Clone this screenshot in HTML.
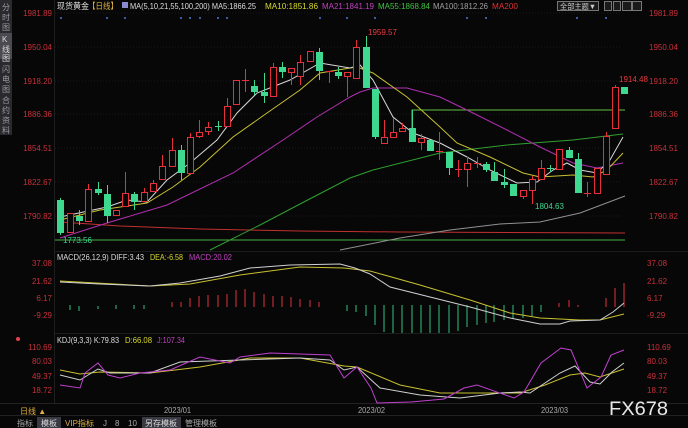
<!DOCTYPE html>
<html><head><meta charset="utf-8">
<style>
html,body{margin:0;padding:0;background:#070707;}
svg{display:block;font-family:"Liberation Sans","Noto Sans CJK SC",sans-serif;}
.ax{fill:#c8303a;font-size:8px;}
</style></head><body>
<svg width="688" height="428" viewBox="0 0 688 428" xmlns="http://www.w3.org/2000/svg">
<rect width="688" height="428" fill="#070707"/>
<!-- left sidebar -->
<rect x="0" y="0" width="12" height="135" fill="#2a2a2e"/>
<rect x="0" y="33" width="12" height="26" fill="#4a4a50"/>
<g fill="#9a9aa0" font-size="8">
<text x="2" y="10">分</text><text x="2" y="20">时</text><text x="2" y="30">图</text>
<text x="2" y="42" fill="#ddd">K</text><text x="2" y="52" fill="#ddd">线</text><text x="2" y="61" fill="#ddd">图</text>
<text x="2" y="72">闪</text><text x="2" y="82">电</text><text x="2" y="92">图</text>
<text x="2" y="103">合</text><text x="2" y="113">约</text><text x="2" y="123">资</text><text x="2" y="133">料</text>
</g>
<!-- panel borders -->
<line x1="54.5" y1="0" x2="54.5" y2="403" stroke="#1e1e1e"/>
<line x1="55" y1="251.5" x2="688" y2="251.5" stroke="#1c1c1c"/>
<line x1="55" y1="333.5" x2="688" y2="333.5" stroke="#1c1c1c"/>
<line x1="0" y1="403.5" x2="688" y2="403.5" stroke="#222"/>
<line x1="0" y1="415.5" x2="688" y2="415.5" stroke="#222"/>
<!-- grid -->
<g stroke="#1a1a22" stroke-dasharray="1,2">
<line x1="55" y1="13" x2="620" y2="13"/><line x1="55" y1="47" x2="620" y2="47"/><line x1="55" y1="81" x2="620" y2="81"/>
<line x1="55" y1="114" x2="620" y2="114"/><line x1="55" y1="148" x2="620" y2="148"/><line x1="55" y1="182" x2="620" y2="182"/><line x1="55" y1="216" x2="620" y2="216"/>
</g>
<!-- header -->
<g font-size="8.5" lengthAdjust="spacingAndGlyphs">
<text x="57" y="9" fill="#ddd" textLength="32" lengthAdjust="spacingAndGlyphs">现货黄金</text><text x="88" y="9" fill="#e0b040" textLength="30" lengthAdjust="spacingAndGlyphs">【日线】</text>
<rect x="122" y="2" width="6" height="6" fill="#8a8ad0"/>
<text x="130" y="9" fill="#ddd" textLength="126" lengthAdjust="spacingAndGlyphs">MA(5,10,21,55,100,200) MA5:1866.25</text>
<text x="265" y="9" fill="#d8d830" textLength="53" lengthAdjust="spacingAndGlyphs">MA10:1851.86</text>
<text x="322" y="9" fill="#c040c0" textLength="52" lengthAdjust="spacingAndGlyphs">MA21:1841.19</text>
<text x="378" y="9" fill="#40c040" textLength="52" lengthAdjust="spacingAndGlyphs">MA55:1868.84</text>
<text x="433" y="9" fill="#a0a0a0" textLength="55" lengthAdjust="spacingAndGlyphs">MA100:1812.26</text>
<text x="492" y="9" fill="#e03030" textLength="26" lengthAdjust="spacingAndGlyphs">MA200</text>
</g>
<rect x="557.5" y="1.5" width="41" height="9" fill="#1a1a1a" stroke="#777"/>
<text x="560" y="9" font-size="7.5" fill="#ccc" textLength="36" lengthAdjust="spacingAndGlyphs">全部主题▼</text>
<g fill="#1a1a1a" stroke="#777"><rect x="604.5" y="1.5" width="7" height="9"/><rect x="613.5" y="1.5" width="7" height="9"/><rect x="622.5" y="1.5" width="9" height="9"/><rect x="632.5" y="1.5" width="9" height="9"/></g>
<!-- price axes -->
<g class="ax" text-anchor="end">
<text x="52" y="16">1981.89</text><text x="52" y="50">1950.04</text><text x="52" y="84">1918.20</text><text x="52" y="117">1886.36</text><text x="52" y="151">1854.51</text><text x="52" y="185">1822.67</text><text x="52" y="219">1790.82</text>
<text x="52" y="266">37.08</text><text x="52" y="284">21.62</text><text x="52" y="301">6.17</text><text x="52" y="318">-9.29</text>
<text x="52" y="350">110.69</text><text x="52" y="364">80.03</text><text x="52" y="379">49.37</text><text x="52" y="393">18.72</text>
</g>
<g class="ax">
<text x="649" y="16">1981.89</text><text x="649" y="50">1950.04</text><text x="649" y="84">1918.20</text><text x="649" y="117">1886.36</text><text x="649" y="151">1854.51</text><text x="649" y="185">1822.67</text><text x="649" y="219">1790.82</text>
<text x="647" y="266">37.08</text><text x="647" y="284">21.62</text><text x="647" y="301">6.17</text><text x="647" y="318">-9.29</text>
<text x="647" y="350">110.69</text><text x="647" y="364">80.03</text><text x="647" y="379">49.37</text><text x="647" y="393">18.72</text>
</g>
<!-- blue dots -->
<g fill="#4a7ad0"><circle cx="61" cy="18" r="1"/><circle cx="107" cy="18" r="1"/><circle cx="125" cy="18" r="1"/><circle cx="181" cy="18" r="1"/><circle cx="190" cy="18" r="1"/><circle cx="200" cy="18" r="1"/><circle cx="218" cy="18" r="1"/><circle cx="227" cy="18" r="1"/><circle cx="320" cy="18" r="1"/><circle cx="347" cy="18" r="1"/><circle cx="375" cy="18" r="1"/><circle cx="467" cy="18" r="1"/><circle cx="486" cy="18" r="1"/><circle cx="577" cy="18" r="1"/><circle cx="606" cy="18" r="1"/></g>
<!-- horizontal lines -->
<line x1="55" y1="240" x2="625" y2="240" stroke="#40b040"/>
<polyline points="60,222 120,226 200,229 300,231 400,232 625,233" fill="none" stroke="#c03030"/>
<polyline points="412,128 412,110 625,110" fill="none" stroke="#60c040"/>
<!-- MAs -->
<polyline fill="none" stroke="#909090" points="340,250 400,238 450,230 500,224 540,222 580,213 625,196"/>
<polyline fill="none" stroke="#30a030" points="210,250 260,225 300,204 350,178 373,170 440,153 507,145 573,140 623,134"/>
<polyline fill="none" stroke="#b030b0" points="60,238 107,223 167,205 233,173 283,140 317,117 350,97 360,92 373,88 407,88 440,97 473,113 507,130 540,147 573,163 597,168 623,163"/>
<polyline fill="none" stroke="#c8c030" points="60,220 100,210 147,203 173,187 200,167 233,137 267,113 300,90 320,73 350,68 357,67 373,73 407,97 440,127 457,143 490,157 523,173 540,177 573,175 593,177 607,170 623,153"/>
<polyline fill="none" stroke="#d8d8d8" points="60,217 107,207 127,200 147,202 167,180 190,163 217,140 237,113 257,93 290,80 320,63 350,68 360,65 373,80 393,117 413,133 440,143 467,157 490,170 517,183 537,182 553,170 567,163 580,170 597,173 610,160 623,137"/>
<!-- candles -->
<g stroke="#e8303a" fill="#070707" stroke-width="1">
<line x1="70.5" y1="213" x2="70.5" y2="233"/><rect x="67.5" y="213.5" width="6" height="19"/>
<line x1="88.5" y1="184" x2="88.5" y2="222"/><rect x="85.5" y="189.5" width="6" height="32"/>
<rect x="113.5" y="210.5" width="6" height="5"/>
<line x1="125.5" y1="172" x2="125.5" y2="193"/><rect x="122.5" y="193.5" width="6" height="13"/>
<line x1="144.5" y1="188" x2="144.5" y2="192"/><rect x="141.5" y="192.5" width="6" height="9"/>
<line x1="153.5" y1="180" x2="153.5" y2="183"/><rect x="150.5" y="183.5" width="6" height="8"/>
<line x1="162.5" y1="155" x2="162.5" y2="166"/><rect x="159.5" y="166.5" width="6" height="13"/>
<line x1="172.5" y1="138" x2="172.5" y2="150"/><rect x="169.5" y="150.5" width="6" height="16"/>
<line x1="190.5" y1="133" x2="190.5" y2="137"/><rect x="187.5" y="137.5" width="6" height="36"/>
<line x1="199.5" y1="120" x2="199.5" y2="138"/><rect x="196.5" y="132.5" width="6" height="4"/>
<line x1="208.5" y1="122" x2="208.5" y2="135"/><rect x="205.5" y="127.5" width="6" height="4"/>
<line x1="227.5" y1="98" x2="227.5" y2="106"/><rect x="224.5" y="106.5" width="6" height="20"/>
<rect x="233.5" y="80.5" width="6" height="24"/>
<line x1="245.5" y1="69" x2="245.5" y2="92"/><line x1="242" y1="80.5" x2="249" y2="80.5"/>
<line x1="273.5" y1="63" x2="273.5" y2="67"/><rect x="270.5" y="67.5" width="6" height="29"/>
<line x1="291.5" y1="68" x2="291.5" y2="85"/><rect x="288.5" y="68.5" width="6" height="4"/>
<line x1="300.5" y1="55" x2="300.5" y2="85"/><rect x="297.5" y="62.5" width="6" height="14"/>
<rect x="307.5" y="51.5" width="6" height="10"/>
<line x1="329.5" y1="71" x2="329.5" y2="83"/><line x1="326" y1="71.5" x2="333" y2="71.5"/>
<line x1="347.5" y1="72" x2="347.5" y2="97"/><rect x="344.5" y="72.5" width="6" height="4"/>
<line x1="356.5" y1="40" x2="356.5" y2="47"/><rect x="353.5" y="47.5" width="6" height="31"/>
<line x1="384.5" y1="120" x2="384.5" y2="137"/><rect x="381.5" y="137.5" width="6" height="6"/>
<line x1="393.5" y1="118" x2="393.5" y2="132"/><rect x="390.5" y="132.5" width="6" height="5"/>
<line x1="402.5" y1="123" x2="402.5" y2="128"/><rect x="399.5" y="128.5" width="6" height="3"/>
<line x1="421.5" y1="134" x2="421.5" y2="150"/><rect x="418.5" y="138.5" width="6" height="4"/>
<line x1="439.5" y1="132" x2="439.5" y2="160"/><line x1="436" y1="151.5" x2="443" y2="151.5"/>
<line x1="458.5" y1="160" x2="458.5" y2="177"/><line x1="455" y1="169.5" x2="462" y2="169.5"/>
<line x1="467.5" y1="157" x2="467.5" y2="187"/><rect x="464.5" y="163.5" width="6" height="6"/>
<line x1="477.5" y1="157" x2="477.5" y2="168"/><line x1="474" y1="163.5" x2="481" y2="163.5"/>
<rect x="520.5" y="190.5" width="6" height="6"/><line x1="523.5" y1="197" x2="523.5" y2="199"/>
<line x1="532.5" y1="176" x2="532.5" y2="204"/><rect x="529.5" y="179.5" width="6" height="11"/>
<line x1="541.5" y1="160" x2="541.5" y2="168"/><rect x="538.5" y="168.5" width="6" height="11"/>
<rect x="556.5" y="149.5" width="6" height="20"/>
<line x1="587.5" y1="182" x2="587.5" y2="197"/><line x1="584" y1="193.5" x2="591" y2="193.5"/>
<rect x="594.5" y="168.5" width="6" height="25"/>
<line x1="606.5" y1="132" x2="606.5" y2="136"/><rect x="603.5" y="136.5" width="6" height="38"/>
<line x1="615.5" y1="85" x2="615.5" y2="87"/><rect x="612.5" y="87.5" width="6" height="41"/>
</g>
<g fill="#3ed890" stroke="#3ed890">
<line x1="60.5" y1="198" x2="60.5" y2="235"/><rect x="57.5" y="200.5" width="6" height="32"/>
<line x1="79.5" y1="210" x2="79.5" y2="225"/><rect x="76.5" y="216.5" width="6" height="4"/>
<line x1="98.5" y1="182" x2="98.5" y2="195"/><rect x="95.5" y="189.5" width="6" height="3"/>
<line x1="107.5" y1="185" x2="107.5" y2="223"/><rect x="104.5" y="194.5" width="6" height="21"/>
<line x1="134.5" y1="192" x2="134.5" y2="210"/><rect x="131.5" y="194.5" width="6" height="7"/>
<line x1="181.5" y1="145" x2="181.5" y2="180"/><rect x="178.5" y="150.5" width="6" height="22"/>
<line x1="218.5" y1="121" x2="218.5" y2="131"/><line x1="215" y1="126.5" x2="222" y2="126.5"/>
<line x1="254.5" y1="80" x2="254.5" y2="95"/><rect x="251.5" y="86.5" width="6" height="5"/>
<line x1="264.5" y1="73" x2="264.5" y2="103"/><rect x="261.5" y="92.5" width="6" height="3"/>
<line x1="282.5" y1="62" x2="282.5" y2="78"/><rect x="279.5" y="67.5" width="6" height="4"/>
<line x1="319.5" y1="48" x2="319.5" y2="80"/><rect x="316.5" y="52.5" width="6" height="18"/>
<line x1="338.5" y1="67" x2="338.5" y2="79"/><rect x="335.5" y="72.5" width="6" height="3"/>
<line x1="366.5" y1="36" x2="366.5" y2="47"/><rect x="363.5" y="47.5" width="6" height="40"/>
<line x1="375.5" y1="89" x2="375.5" y2="139"/><rect x="372.5" y="89.5" width="6" height="47"/>
<line x1="412.5" y1="110" x2="412.5" y2="142"/><rect x="409.5" y="128.5" width="6" height="13"/>
<rect x="427.5" y="140.5" width="6" height="10"/>
<line x1="449.5" y1="152" x2="449.5" y2="175"/><rect x="446.5" y="152.5" width="6" height="15"/>
<line x1="486.5" y1="162" x2="486.5" y2="172"/><rect x="483.5" y="164.5" width="6" height="5"/>
<line x1="494.5" y1="162" x2="494.5" y2="181"/><rect x="491.5" y="172.5" width="6" height="8"/>
<line x1="504.5" y1="169" x2="504.5" y2="188"/><rect x="501.5" y="182.5" width="6" height="2"/>
<rect x="510.5" y="184.5" width="6" height="11"/>
<line x1="550.5" y1="165" x2="550.5" y2="172"/><line x1="547" y1="168.5" x2="554" y2="168.5"/>
<line x1="569.5" y1="147" x2="569.5" y2="158"/><rect x="566.5" y="150.5" width="6" height="7"/>
<line x1="578.5" y1="153" x2="578.5" y2="193"/><rect x="575.5" y="159.5" width="6" height="33"/>
<rect x="621.5" y="87.5" width="6" height="6"/>
</g>
<g font-size="8">
<text x="368" y="35" fill="#e83a40">1959.57</text>
<text x="619" y="82" fill="#e83a40">1914.48</text>
<text x="63" y="243" fill="#3ed890">1773.56</text>
<text x="535" y="209" fill="#3ed890">1804.63</text>
</g>
<!-- MACD -->
<g font-size="8.5"><text x="57" y="260" fill="#ddd" textLength="87" lengthAdjust="spacingAndGlyphs">MACD(26,12,9) DIFF:3.43</text><text x="150" y="260" fill="#d8d830" textLength="33" lengthAdjust="spacingAndGlyphs">DEA:-6.58</text><text x="189" y="260" fill="#c040c0" textLength="43" lengthAdjust="spacingAndGlyphs">MACD:20.02</text></g>
<g stroke="#e03040">
<line x1="172" y1="307" x2="172" y2="302"/><line x1="181" y1="307" x2="181" y2="302"/><line x1="190" y1="307" x2="190" y2="298"/><line x1="199" y1="307" x2="199" y2="296"/><line x1="208" y1="307" x2="208" y2="295"/><line x1="218" y1="307" x2="218" y2="295"/><line x1="227" y1="307" x2="227" y2="294"/><line x1="236" y1="307" x2="236" y2="290"/><line x1="245" y1="307" x2="245" y2="289"/><line x1="254" y1="307" x2="254" y2="292"/><line x1="264" y1="307" x2="264" y2="294"/><line x1="273" y1="307" x2="273" y2="296"/><line x1="282" y1="307" x2="282" y2="296"/><line x1="291" y1="307" x2="291" y2="297"/><line x1="300" y1="307" x2="300" y2="299"/><line x1="310" y1="307" x2="310" y2="300"/><line x1="319" y1="307" x2="319" y2="302"/>
<line x1="559" y1="307" x2="559" y2="303"/><line x1="569" y1="307" x2="569" y2="300"/><line x1="578" y1="307" x2="578" y2="305"/><line x1="606" y1="307" x2="606" y2="298"/><line x1="615" y1="307" x2="615" y2="288"/><line x1="624" y1="307" x2="624" y2="283"/>
</g>
<g stroke="#30c080">
<line x1="70" y1="305" x2="70" y2="310"/><line x1="79" y1="306" x2="79" y2="311"/><line x1="98" y1="306" x2="98" y2="309"/><line x1="116" y1="305" x2="116" y2="309"/><line x1="134" y1="305" x2="134" y2="309"/><line x1="144" y1="305" x2="144" y2="309"/>
<line x1="347" y1="305" x2="347" y2="311"/><line x1="356" y1="305" x2="356" y2="312"/><line x1="366" y1="305" x2="366" y2="316"/><line x1="375" y1="305" x2="375" y2="325"/><line x1="384" y1="305" x2="384" y2="332"/><line x1="393" y1="305" x2="393" y2="333"/><line x1="402" y1="305" x2="402" y2="333"/><line x1="412" y1="305" x2="412" y2="333"/><line x1="421" y1="305" x2="421" y2="333"/><line x1="430" y1="305" x2="430" y2="333"/><line x1="439" y1="305" x2="439" y2="333"/><line x1="449" y1="305" x2="449" y2="333"/><line x1="458" y1="305" x2="458" y2="331"/><line x1="467" y1="305" x2="467" y2="327"/><line x1="477" y1="305" x2="477" y2="325"/><line x1="486" y1="305" x2="486" y2="323"/><line x1="494" y1="305" x2="494" y2="322"/><line x1="504" y1="305" x2="504" y2="320"/><line x1="513" y1="305" x2="513" y2="319"/><line x1="523" y1="305" x2="523" y2="318"/><line x1="532" y1="305" x2="532" y2="316"/><line x1="541" y1="305" x2="541" y2="312"/>
</g>
<polyline fill="none" stroke="#c8c030" points="60,281 150,286 190,284 240,275 300,267 344,268 370,271 420,285 470,300 510,313 540,318 580,320 600,320 624,314"/>
<polyline fill="none" stroke="#d0d0d0" points="60,282 100,284 150,286 180,283 220,276 250,268 290,265 340,264 355,268 370,274 390,287 430,297 470,307 510,318 540,324 560,324 570,321 600,320 613,312 624,303"/>
<!-- KDJ -->
<circle cx="18" cy="339" r="2" fill="#e04050"/>
<g font-size="8.5"><text x="57" y="343" fill="#ddd" textLength="62" lengthAdjust="spacingAndGlyphs">KDJ(9,3,3) K:79.83</text><text x="125" y="343" fill="#d8d830" textLength="27" lengthAdjust="spacingAndGlyphs">D:66.08</text><text x="157" y="343" fill="#c040c0" textLength="28" lengthAdjust="spacingAndGlyphs">J:107.34</text></g>
<polyline fill="none" stroke="#c8c030" points="60,370 80,374 100,372 150,373 200,367 250,358 300,358 344,366 357,367 400,385 440,393 480,393 520,393 545,385 570,375 585,373 600,377 624,369"/>
<polyline fill="none" stroke="#d0d0d0" points="60,375 80,380 98,369 110,373 150,373 180,362 240,360 300,358 330,360 344,370 357,367 380,388 420,395 460,398 500,393 520,392 530,393 545,383 560,373 575,366 590,382 600,384 612,372 624,363"/>
<polyline fill="none" stroke="#c040d0" points="60,385 80,388 85,373 98,363 108,375 120,378 140,373 170,370 200,357 230,363 240,357 270,353 300,354 330,355 344,378 357,367 371,388 377,403 411,402 444,399 464,388 477,385 514,398 524,392 541,363 561,348 571,350 587,388 601,377 611,355 624,350"/>
<!-- bottom -->
<text x="20" y="414" font-size="8" fill="#e0b040">日线 ▲</text>
<g font-size="8" fill="#aaa"><text x="164" y="413" textLength="27" lengthAdjust="spacingAndGlyphs">2023/01</text><text x="358" y="413" textLength="27" lengthAdjust="spacingAndGlyphs">2023/02</text><text x="541" y="413" textLength="27" lengthAdjust="spacingAndGlyphs">2023/03</text></g>
<text x="609" y="415" font-size="19" fill="#e8e8e8" textLength="59" lengthAdjust="spacingAndGlyphs">FX678</text>
<rect x="37" y="417" width="24" height="11" fill="#3a3a44"/>
<rect x="142" y="417" width="39" height="11" fill="#3a3a44"/>
<g font-size="8" fill="#aaa">
<text x="17" y="426">指标</text><text x="41" y="426" fill="#ddd">模板</text><text x="65" y="426" fill="#e0b040" textLength="29" lengthAdjust="spacingAndGlyphs">VIP指标</text><text x="103" y="426">J</text><text x="115" y="426">8</text><text x="128" y="426">10</text><text x="145" y="426" fill="#ddd">另存模板</text><text x="185" y="426">管理模板</text>
</g>
</svg>
</body></html>
